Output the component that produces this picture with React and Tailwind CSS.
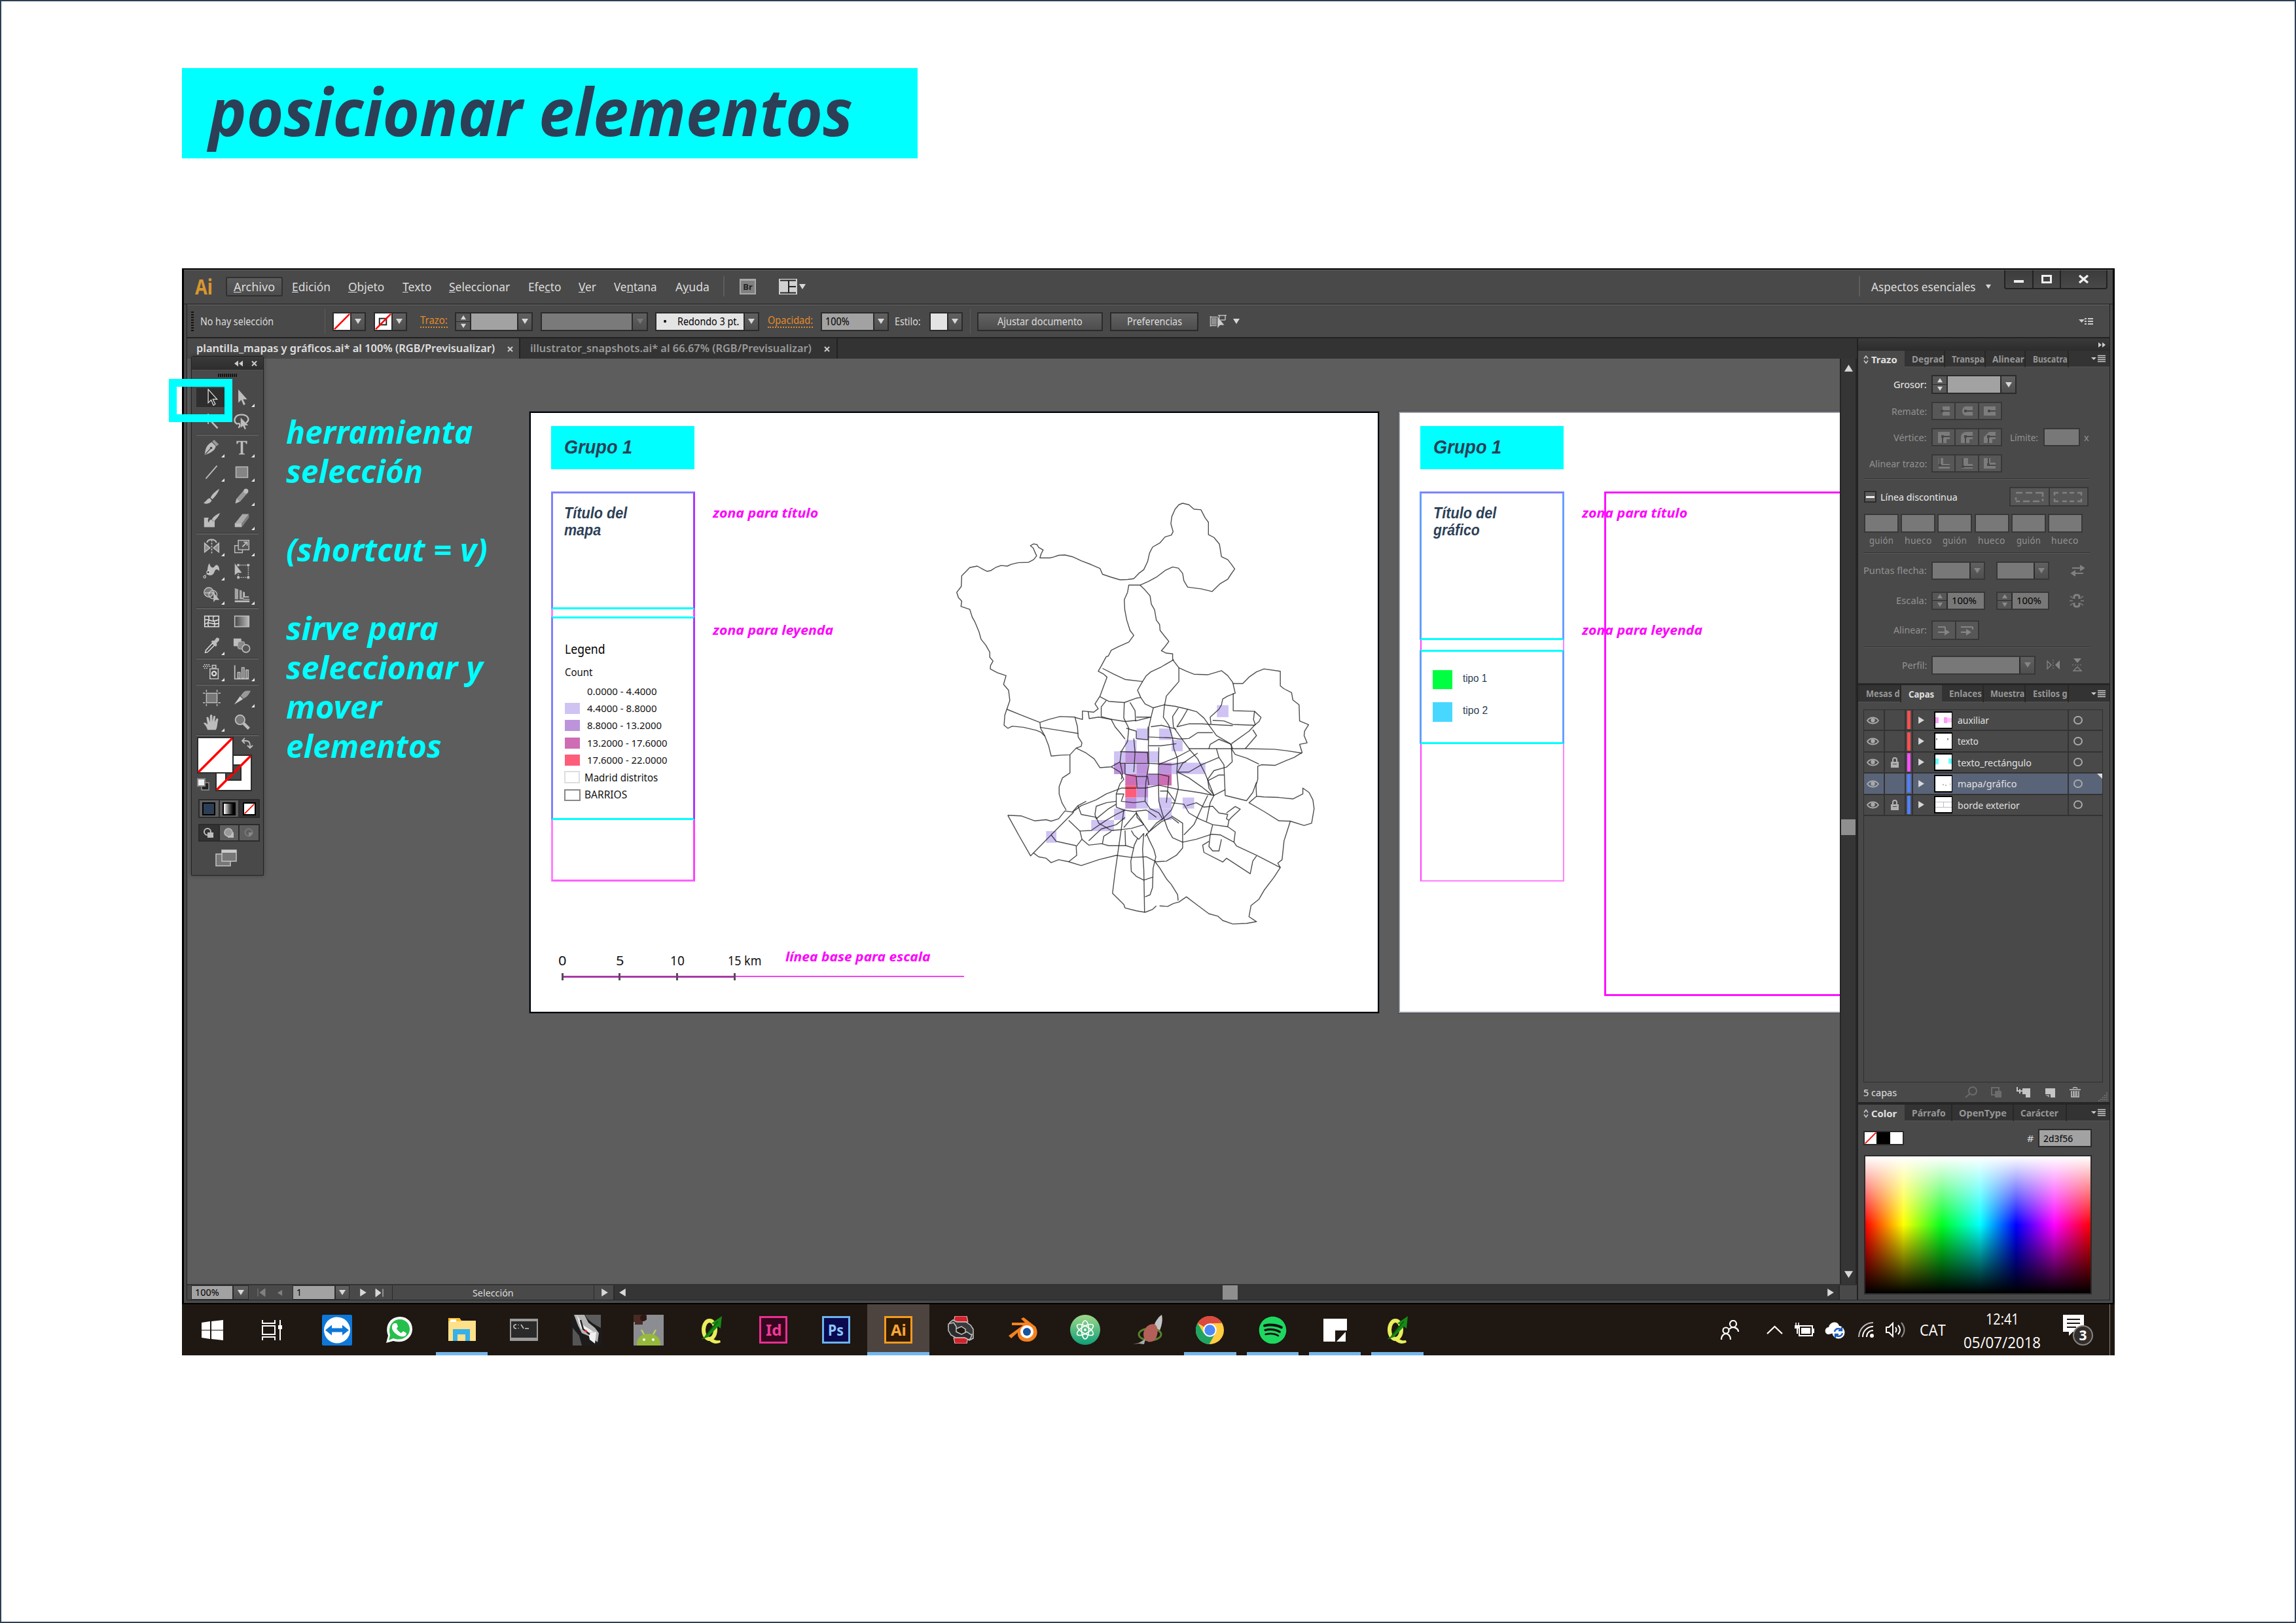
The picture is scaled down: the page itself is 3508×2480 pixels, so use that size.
import React, { useLayoutEffect, useRef } from "react";
import { FaSpotify } from "react-icons/fa";

/* Text set to an exact advance width, whatever the font's own metrics. */
function T({ w, className = "", inner = "", children }) {
  const ref = useRef(null);
  useLayoutEffect(() => {
    const el = ref.current;
    if (el && w) el.style.transform = `scaleX(${w / el.offsetWidth})`;
  }, [w, children]);
  return (
    <span style={w ? { width: w } : undefined} className={`inline-flex shrink-0 whitespace-nowrap ${className}`}>
      <span ref={ref} className={`inline-block shrink-0 origin-left ${inner}`}>{children}</span>
    </span>
  );
}

/* Text on the artboards, placed by its baseline. */
function Mark({ x, y, w, size, arial, className = "", children }) {
  return (
    <div
      className={`absolute leading-none ${arial ? "font-['Liberation_Sans',sans-serif]" : ""} ${className}`}
      style={{ left: x, top: y + 1 - size * (arial ? 0.8465 : 0.888), fontSize: size }}
    >
      <T w={w}>{children}</T>
    </div>
  );
}

function Box({ x, y, w, h, className = "" }) {
  return <div className={`absolute ${className}`} style={{ left: x, top: y, width: w, height: h }} />;
}

function Tri({ d = "down", s = 10, c = "#d8d8d8" }) {
  const p = { down: "0,1 10,1 5,9", up: "0,9 10,9 5,1", right: "1,0 9,5 1,10", left: "9,0 1,5 9,10" }[d];
  return (
    <svg width={s} height={s} viewBox="0 0 10 10" className="shrink-0" preserveAspectRatio="none">
      <polygon points={p} fill={c} />
    </svg>
  );
}

const edge = "border-2 border-[#2b2b2b]";

function Arrow({ className = "w-[24px]", c = "#d8d8d8" }) {
  return (
    <div className={`flex shrink-0 items-center justify-center border-l-2 border-[#2b2b2b] bg-gradient-to-b from-[#606060] to-[#4f4f4f] ${className}`}>
      <Tri c={c} />
    </div>
  );
}

function Stepper({ c = "#d8d8d8" }) {
  return (
    <div className="flex w-[23px] shrink-0 flex-col border-r-2 border-[#2b2b2b] bg-[#575757]">
      <div className="flex flex-1 items-center justify-center border-b border-[#2b2b2b]"><Tri d="up" s={8} c={c} /></div>
      <div className="flex flex-1 items-center justify-center"><Tri s={8} c={c} /></div>
    </div>
  );
}

function NoneSwatch({ stroke }) {
  return (
    <svg viewBox="0 0 26 26" preserveAspectRatio="none" className="h-full w-full bg-white">
      {stroke && <rect x="7" y="8" width="11" height="10" fill="none" stroke="#222" strokeWidth="2" />}
      <line x1="1" y1="25" x2="25" y2="1" stroke="#f00" strokeWidth="2.6" />
    </svg>
  );
}

function Flyout() {
  return (
    <svg width="22" height="12" viewBox="0 0 22 12" className="shrink-0">
      <polygon points="0,4 8,4 4,8" fill="#ccc" />
      <path d="M10 1.5h12M10 4.5h12M10 7.5h12M10 10.5h12" stroke="#ccc" strokeWidth="1.4" />
    </svg>
  );
}

/* ---------- menu and control bars ---------- */

function MenuBar() {
  const rest = [
    ["ml-[14px]", 59, "E", "dición", ""],
    ["ml-[27px]", 55, "O", "bjeto", ""],
    ["ml-[28px]", 44, "T", "exto", ""],
    ["ml-[27px]", 93, "S", "eleccionar", ""],
    ["ml-[28px]", 50, "c", "to", "Efe"],
    ["ml-[27px]", 27, "V", "er", ""],
    ["ml-[27px]", 66, "n", "tana", "Ve"],
    ["ml-[28px]", 52, "y", "uda", "A"],
  ];
  return (
    <div className="flex h-[53px] items-center border-b border-[#222] border-t-[1px] border-t-[#666] pb-[2px] text-[18px] leading-none text-[#dcdcdc]">
      <T w={27} className="ml-[17px] text-[33px] font-bold text-[#d9962f]">Ai</T>
      <div className="ml-[20px] flex h-[30px] w-[87px] items-center justify-center rounded-[3px] border-2 border-[#303030] bg-gradient-to-b from-[#5b5b5b] to-[#4c4c4c]">
        <T w={63}><u>A</u>rchivo</T>
      </div>
      {rest.map(([m, w, u, b, a]) => (
        <T key={b} w={w} className={m}>{a}<u>{u}</u>{b}</T>
      ))}
      <div className="ml-[21px] h-[31px] w-[2px] bg-[#5c5c5c]" />
      <div className="ml-[23px] flex h-[24px] w-[25px] items-center justify-center border-2 border-t-[3px] border-[#a9a9a9] bg-[#808080] text-[13px] font-bold text-[#222]">Br</div>
      <svg className="ml-[35px]" width="28" height="24" viewBox="0 0 28 24">
        <rect width="28" height="24" fill="#d0d0d0" />
        <path d="M2 2.5h24M2 21.5h24M15 2v20M15 12h11" stroke="#222" strokeWidth="2" />
      </svg>
      <span className="ml-[3px]"><Tri /></span>
      <div className="ml-auto h-[31px] w-[2px] bg-[#5c5c5c]" />
      <T w={160} className="ml-[17px]">Aspectos esenciales</T>
      <span className="ml-[15px]"><Tri s={8} /></span>
      <div className="ml-[20px] mr-[8px] flex h-[29px] w-[158px] self-start rounded-b-[4px] border-2 border-t-0 border-[#222] bg-gradient-to-b from-[#3c3c3c] to-[#484848]">
        <div className="flex w-[43px] items-center justify-center border-r-2 border-[#222]"><div className="mt-[6px] h-[4px] w-[15px] bg-[#eee]" /></div>
        <div className="flex w-[42px] items-center justify-center border-r-2 border-[#222]"><div className="h-[13px] w-[16px] border-[3px] border-[#eee]" /></div>
        <div className="flex flex-1 items-center justify-center">
          <svg width="17" height="13" viewBox="0 0 17 13"><path d="M2 1l13 11M15 1L2 12" stroke="#eee" strokeWidth="3.4" /></svg>
        </div>
      </div>
    </div>
  );
}

function ControlBar() {
  const f = `flex h-[29px] shrink-0 ${edge}`;
  return (
    <div className="flex h-[52px] items-center border-b-2 border-[#222] border-t-2 border-t-[#555] text-[16px] leading-none text-[#dcdcdc]">
      <div className="ml-[6px] flex h-[31px] w-[4px] flex-col gap-[2px] overflow-hidden">
        {Array.from({ length: 8 }, (_, i) => <div key={i} className="h-[2px] shrink-0 bg-[#111]" />)}
      </div>
      <T w={112} className="ml-[10px]">No hay selección</T>
      <div className="ml-[78px] h-[38px] w-[1px] bg-[#5c5c5c]" />
      <div className={`${f} ml-[11px] w-[51px]`}><div className="flex-1"><NoneSwatch /></div><Arrow className="w-[22px]" /></div>
      <div className={`${f} ml-[12px] w-[51px]`}><div className="flex-1"><NoneSwatch stroke /></div><Arrow className="w-[22px]" /></div>
      <T w={42} className="ml-[20px] border-b-2 border-dotted border-[#e48a2a] pb-[2px] text-[#e48a2a]">Trazo:</T>
      <div className={`${f} ml-[11px] w-[119px]`}><Stepper /><div className="flex-1 bg-[#a2a2a2]" /><Arrow className="w-[22px]" /></div>
      <div className={`${f} ml-[12px] w-[164px]`}><div className="flex-1 bg-[#7a7a7a]" /><Arrow className="w-[23px]" c="#777" /></div>
      <div className={`${f} ml-[11px] w-[159px]`}>
        <div className="flex flex-1 items-center bg-[#e4e4e4] text-black"><span className="ml-[10px] w-[22px]">•</span><T w={94}>Redondo 3 pt.</T></div>
        <Arrow className="w-[22px]" />
      </div>
      <T w={69} className="ml-[13px] border-b-2 border-dotted border-[#e48a2a] pb-[2px] text-[#e48a2a]">Opacidad:</T>
      <div className={`${f} ml-[12px] w-[104px]`}>
        <div className="flex flex-1 items-center bg-[#a2a2a2] pl-[5px] text-black"><T w={37}>100%</T></div>
        <Arrow className="w-[22px]" />
      </div>
      <T w={40} className="ml-[9px]">Estilo:</T>
      <div className={`${f} ml-[13px] w-[51px]`}><div className="flex-1 bg-[#e4e4e4]" /><Arrow className="w-[22px]" /></div>
      <div className="ml-[11px] h-[38px] w-[1px] bg-[#5c5c5c]" />
      <div className={`${f} ml-[10px] w-[192px] items-center justify-center bg-gradient-to-b from-[#626262] to-[#4d4d4d]`}><T w={130}>Ajustar documento</T></div>
      <div className={`${f} ml-[11px] w-[135px] items-center justify-center bg-gradient-to-b from-[#626262] to-[#4d4d4d]`}><T w={84}>Preferencias</T></div>
      <svg className="ml-[17px]" width="26" height="23" viewBox="0 0 26 23">
        <rect x="3" y="6" width="8" height="10" fill="#8f8f8f" />
        <path d="M1 4.500h12M1 17.500h10M1.500 3v16M15 1v8M24 1v8M13 2h13M15 9h9" stroke="#bbb" strokeWidth="1.500" fill="none" />
        <path d="M12 3v19l4-5h7z" fill="#ccc" stroke="#444" strokeWidth=".6" />
      </svg>
      <span className="ml-[10px]"><Tri /></span>
      <svg className="ml-auto mr-[25px]" width="22" height="12" viewBox="0 0 22 12">
        <polygon points="0,3 9,3 4.500,8" fill="#ccc" /><path d="M9 2h3M9 6h3M9 10h3M14 2h8M14 6h8M14 10h8" stroke="#ccc" strokeWidth="2.200" />
      </svg>
    </div>
  );
}

/* ---------- tools ---------- */

const L = "#bdbdbd";
const toolArt = {
  select: <path d="M9 1v23l5-5 4 9 3-2-4-8h7z" fill="#262626" stroke="#e2e2e2" strokeWidth="1.4" />,
  direct: <path d="M9 1v23l5-5 4 9 3-2-4-8h7z" fill={L} />,
  wand: <g stroke={L} strokeWidth="2" fill="none"><path d="M12 12l13 14" strokeWidth="3" /><path d="M9 1v6M9 14v5M2 10h5M12 10h5M4 5l3 3M14 5l-3 3" /></g>,
  lasso: <g><path d="M7 19C-1 14 3 3 14 3s16 8 8 14M7 19c5-4 6 4 2 6" fill="none" stroke={L} strokeWidth="2.6" /><path d="M13 8v17l4-3 3 6 2-1-2-6h6z" fill={L} /></g>,
  pen: <g><path d="M3 27C4 14 8 9 15 5l7 7c-2 8-8 11-19 15z" fill={L} /><path d="M16 4l3-3 8 8-4 3z" fill="#999" /><path d="M4 26l9-10" stroke="#444" strokeWidth="1.5" /><circle cx="14" cy="15" r="2" fill="#444" /></g>,
  text: <path d="M6 3h18v5h-2l-1-3h-4v19l3 1v1H10v-1l3-1V5H9L8 8H6z" fill={L} />,
  line: <path d="M5 26L24 4" stroke={L} strokeWidth="2" />,
  rect: <rect x="5" y="6" width="20" height="18" fill="#858585" stroke={L} strokeWidth="1.6" />,
  brush: <path d="M28 2C22 6 16 11 13 17l3 3c5-5 10-11 12-18zM12 18c-5 0-6 6-11 8 5 3 12 1 14-4z" fill={L} />,
  pencil: <g><path d="M4 27l2-8L18 5l6 5L12 24z" fill="#999" /><path d="M4 27l2-8 5 5z" fill={L} /><circle cx="22" cy="6" r="4" fill={L} /></g>,
  blob: <g><path d="M2 10h8c-3 5-1 9 3 9 5 0 6-4 7-7v14H2z" fill={L} /><path d="M29 2C23 5 18 8 15 13l4 3c4-4 8-8 10-14zM14 13c-4 1-3 5-5 7 4 0 8 0 9-4z" fill={L} /></g>,
  eraser: <g><path d="M3 20L16 4h11L15 20z" fill="#aaa" /><path d="M3 20h12v6H3z" fill={L} /><path d="M15 20L27 4v6L15 26z" fill="#7e7e7e" /></g>,
  rotate: <g fill="none" stroke={L} strokeWidth="1.8"><path d="M3 24V9l9 8zM27 24V9l-9 8z" fill="#8c8c8c" /><path d="M15 3v25" strokeDasharray="3 2" /><path d="M7 8c1-7 14-7 16 0" strokeWidth="2.4" /></g>,
  scale: <g fill="none" stroke={L} strokeWidth="1.6"><rect x="3" y="13" width="13" height="12" /><rect x="9" y="4" width="18" height="16" fill="#555" /><path d="M16 15l7-7M18 7h6v6" strokeWidth="2" /></g>,
  width: <g><path d="M2 24c8-2 4-16 9-22 2 8 6 9 9 5 4-5 8-1 8 8-5-5-7-3-9 3-3 6-9 5-13 2z" fill={L} /><circle cx="9" cy="17" r="2.5" fill="#444" stroke="#fff" /><circle cx="3" cy="25" r="2" fill="none" stroke="#fff" /></g>,
  free: <g><path d="M3 2v20l5-4 7 0z" fill={L} /><path d="M9 5h17v21H9v-6" fill="none" stroke={L} strokeWidth="1.6" strokeDasharray="2 1.500" /><path d="M7 3h4v4H7zM24 3h4v4h-4zM24 24h4v4h-4zM7 24h4v4H7z" fill={L} /></g>,
  shape: <g><circle cx="10" cy="10" r="8" fill="#777" stroke={L} strokeWidth="1.6" /><circle cx="17" cy="14" r="7" fill="none" stroke={L} strokeWidth="1.6" /><path d="M4 11h16" stroke="#fff" strokeWidth="1.6" strokeDasharray="2 1.5" /><path d="M18 10v17l3-4h7z" fill={L} /></g>,
  persp: <g><path d="M3 3l6 2v17H3zM11 6l4 1v12h3v3h-7z" fill="#a5a5a5" /><path d="M17 9l3 1v7h7v2H17zM3 24h25v3H3zM17 21h11v1.500H17z" fill={L} /></g>,
  mesh: <g fill="none" stroke="#e0e0e0" strokeWidth="1.7"><rect x="3" y="6" width="24" height="18" /><path d="M3 13c7-5 9 6 24-1M3 20c8-7 14 3 24-2M9 6c5 6-4 10 1 18M19 6c-6 7 5 10 0 18" /></g>,
  grad: <g><defs><linearGradient id="tg"><stop offset="0" stopColor="#444" /><stop offset="1" stopColor="#bbb" /></linearGradient></defs><rect x="3" y="6" width="24" height="18" fill="url(#tg)" stroke={L} strokeWidth="1.8" /></g>,
  drop: <g><path d="M4 27l1-4L16 11l4 3L8 26z" fill="none" stroke="#ddd" strokeWidth="1.6" /><path d="M14 8l3-2 2 1 4-5c4-1 6 2 4 5l-4 4 1 3-2 3z" fill={L} /></g>,
  blend: <g><rect x="1" y="3" width="13" height="13" fill={L} /><rect x="8" y="8" width="12" height="13" rx="4" fill="#888" stroke={L} /><circle cx="22" cy="20" r="6.5" fill="#555" stroke={L} strokeWidth="1.8" /></g>,
  spray: <g><path d="M12 10h14v17H12zM16 4h6v5h-6z" fill="none" stroke={L} strokeWidth="1.8" /><circle cx="19" cy="18" r="3.5" fill="none" stroke="#ddd" strokeWidth="2.4" /><path d="M0 6h13M2 3h10M2 9h7" stroke="#ddd" strokeWidth="1.6" strokeDasharray="2 1.6" /></g>,
  graph: <g fill="#777" stroke={L} strokeWidth="1.6"><path d="M3 4v23h24" fill="none" strokeWidth="2" /><rect x="8" y="16" width="4" height="10" /><rect x="15" y="8" width="4" height="18" /><rect x="22" y="12" width="4" height="14" /></g>,
  board: <g fill="none" stroke={L} strokeWidth="1.6"><rect x="6" y="7" width="18" height="16" fill="#777" /><path d="M6 1v4M24 1v4M6 25v4M24 25v4M0 7h4M0 23h4M26 7h4M26 23h4" /></g>,
  knife: <g><path d="M2 26L12 12l5 5z" fill="#ccc" /><path d="M13 11l5-6c4-3 8-2 12-2-3 5-5 10-12 13z" fill="#999" /></g>,
  hand: <path d="M8 28c-2-6-5-9-7-11 2-3 5 0 7 2L6 7c2-2 4 0 4 2l2 6V4c1-3 4-2 4 0v10l2-9c2-2 4 0 3 2l-1 8 3-6c2-1 3 0 3 2-2 6-1 12-4 17z" fill={L} />,
  zoom: <g><circle cx="12" cy="11" r="8" fill="#777" stroke={L} strokeWidth="2" /><path d="M18 17l9 9" stroke={L} strokeWidth="5" /></g>,
};

const toolRows = [
  ["select", "direct", 0, 1], ["wand", "lasso", 0, 0], null,
  ["pen", "text", 1, 1], ["line", "rect", 1, 1], ["brush", "pencil", 0, 1], ["blob", "eraser", 0, 1], null,
  ["rotate", "scale", 1, 1], ["width", "free", 1, 0], ["shape", "persp", 1, 1], null,
  ["mesh", "grad", 0, 0], ["drop", "blend", 1, 0], null,
  ["spray", "graph", 1, 1], null,
  ["board", "knife", 0, 1], ["hand", "zoom", 1, 0], null,
];

function Tool({ name, more, on }) {
  return (
    <div className={`relative flex h-[37px] w-[46px] items-center justify-center ${on ? "bg-[#2e2e2e] bg-clip-content py-[4px]" : ""}`}>
      <svg width="27" height="27" viewBox="0 0 30 30">{toolArt[name]}</svg>
      {more ? <svg className="absolute bottom-[4px] right-[3px]" width="5" height="5" viewBox="0 0 5 5"><path d="M5 0v5H0z" fill="#e8e8e8" /></svg> : null}
    </div>
  );
}

function ToolPanel() {
  const cell = "flex flex-1 items-center justify-center border-r-2 border-[#2b2b2b] last:border-r-0";
  return (
    <div className="absolute left-[6px] top-[-4px] z-10 flex h-[794px] w-[111px] flex-col rounded-t-[3px] border border-[#222] bg-[#494949] shadow-[0_0_6px_rgba(0,0,0,.35)]">
      <div className="flex h-[20px] items-center justify-end gap-[13px] bg-gradient-to-b from-[#3a3a3a] to-[#2d2d2d] pr-[9px]">
        <svg width="13" height="9" viewBox="0 0 13 9"><path d="M6 0v9L0 4.500zM13 0v9L7 4.500z" fill="#ccc" /></svg>
        <svg width="9" height="9" viewBox="0 0 9 9"><path d="M1 1l7 7M8 1L1 8" stroke="#ccc" strokeWidth="2" /></svg>
      </div>
      <div className="flex h-[24px] items-start justify-center gap-[1px] border-t border-[#555] pt-[5px]">
        {Array.from({ length: 10 }, (_, i) => <div key={i} className="h-[5px] w-[2px] bg-[#161616]" />)}
      </div>
      {toolRows.map((r, i) =>
        r ? (
          <div key={i} className="flex pl-[7px]">
            <Tool name={r[0]} more={r[2]} on={i === 0} />
            <Tool name={r[1]} more={r[3]} />
          </div>
        ) : (
          <div key={i} className="mx-[7px] h-[3px] border-b-2 border-[#5c5c5c] border-t border-t-[#3a3a3a]" />
        )
      )}
      <div className="relative ml-[8px] h-[95px] w-[92px]">
        <svg className="absolute left-[28px] top-[28px]" width="56" height="56" viewBox="0 0 56 56">
          <rect x="1" y="1" width="54" height="54" fill="#fff" stroke="#2b2b2b" strokeWidth="2" />
          <rect x="16" y="16" width="23" height="23" fill="#494949" stroke="#2b2b2b" strokeWidth="2" />
          <line x1="2" y1="54" x2="54" y2="2" stroke="#f00" strokeWidth="3.6" />
        </svg>
        <svg className="absolute left-0 top-[1px]" width="56" height="56" viewBox="0 0 56 56">
          <rect x="1" y="1" width="54" height="54" fill="#fff" stroke="#2b2b2b" strokeWidth="2" />
          <line x1="2" y1="54" x2="54" y2="2" stroke="#f00" strokeWidth="3.6" />
        </svg>
        <svg className="absolute left-[68px] top-[2px]" width="18" height="18" viewBox="0 0 18 18"><path d="M2 5h5c4 0 6 3 6 7v3M5 1L1 5l4 4M9 12l4 4 4-4" fill="none" stroke={L} strokeWidth="1.8" /></svg>
        <svg className="absolute left-0 top-[64px]" width="19" height="19" viewBox="0 0 19 19"><rect x="7" y="7" width="11" height="11" fill="#222" stroke="#bbb" /><rect x="1" y="1" width="11" height="11" fill="#eee" stroke="#888" strokeWidth="2" /></svg>
      </div>
      <div className={`ml-[10px] mt-[1px] flex h-[29px] w-[94px] shrink-0 bg-[#5e5e5e] ${edge}`}>
        <div className={cell}><div className="h-[20px] w-[20px] border-2 border-black bg-[#2d3f56]" /></div>
        <div className={cell}><div className="h-[20px] w-[20px] border-2 border-black bg-gradient-to-r from-white to-black" /></div>
        <div className={`${cell} bg-[#333]`}><div className="h-[20px] w-[20px] border-2 border-black"><NoneSwatch /></div></div>
      </div>
      <div className={`ml-[10px] mt-[9px] flex h-[27px] w-[94px] shrink-0 bg-[#5e5e5e] ${edge}`}>
        <div className={`${cell} bg-[#333]`}><svg width="16" height="16" viewBox="0 0 16 16"><circle cx="6" cy="6" r="5" fill="none" stroke={L} strokeWidth="2" /><rect x="6" y="7" width="9" height="8" fill={L} /></svg></div>
        <div className={cell}><svg width="16" height="16" viewBox="0 0 16 16"><rect x="6" y="7" width="9" height="8" fill={L} /><circle cx="7" cy="7" r="6" fill="#999" stroke={L} strokeWidth="1.6" /></svg></div>
        <div className={cell}><svg width="16" height="16" viewBox="0 0 16 16"><circle cx="7" cy="7" r="5.500" fill="none" stroke="#777" strokeWidth="2" /><path d="M7 7h6v2l-4 4H7z" fill="#888" /></svg></div>
      </div>
      <svg className="ml-[36px] mt-[12px]" width="33" height="27" viewBox="0 0 33 27"><rect x="1" y="7" width="22" height="18" fill="#777" stroke={L} strokeWidth="1.6" /><rect x="10" y="1" width="22" height="17" fill="#777" stroke={L} strokeWidth="1.6" /><path d="M10 3h22" stroke="#ccc" strokeWidth="4" /></svg>
    </div>
  );
}

/* ---------- canvas ---------- */

const mapLines = [
  "790,323 765,326 735,327 700,318 665,308 655,288 620,275 580,262 545,248 515,242 490,243 470,249 455,252 415,252 420,238 428,225 410,216 403,206 390,204 377,210 388,218 402,245 390,258 370,267 330,268 300,274 285,280 260,278 240,284 220,295 205,298 190,292 165,280 135,285 118,300 103,313 101,350 83,370 90,388 103,400 100,418 135,428 145,455 155,470 172,505 180,530 200,552 215,575 215,592 228,605 218,620 217,632 245,645 280,655 270,685 290,705 295,740 283,770 275,790 272,825 287,835 305,828 350,832 400,842 418,848 435,862",
  "790,323 810,305 830,292 845,265 853,235 865,215 895,200 915,180 940,174 947,162 938,135 942,110 955,85 970,70 985,65 1010,70 1030,85 1058,87 1075,115 1088,130 1088,172 1110,182 1132,205 1140,248 1165,258 1178,272 1193,290 1178,308 1165,325 1135,340 1103,367 1060,358 1005,352 990,330 985,305 968,287 945,283 915,295 880,318 850,332 815,345 770,345 765,370 752,395 754,430 762,465 775,500 790,517 770,540 730,555 700,568 688,588 680,590 660,622 648,640 670,650 683,660 668,695 655,725 635,752 648,768 630,780 585,776 585,805 555,798",
  "815,345 835,362 855,382 860,410 873,430 880,465 893,480 895,500 915,522 930,538 915,555 900,570 920,578 945,580 945,600 970,628 970,675 945,700 920,725 912,760 908,797 930,825 945,870 950,905 965,940",
  "665,630 710,650 755,668 825,675 840,655 858,642 900,625 950,600",
  "825,675 805,705 818,730 835,752 868,765 858,800 850,830 848,900 850,960 838,1020 835,1085 855,1110 890,1125 905,1145 880,1160 850,1190",
  "970,628 1000,640 1030,650 1085,652 1140,638 1165,655 1185,678 1195,715 1165,725 1145,735 1140,755 1130,770 1095,797 1098,820",
  "1185,682 1225,682 1250,660 1280,642 1310,632 1375,640 1375,690 1390,700 1420,713 1425,738 1450,755 1452,810 1488,823 1472,845 1470,860 1482,885 1452,890 1462,918 1430,935 1400,945 1355,962 1300,960 1285,965 1285,1010 1278,1030 1280,1068 1310,1070 1370,1072 1425,1077 1465,1060 1465,1040 1490,1055 1505,1080 1510,1110 1500,1160 1470,1168 1415,1153 1370,1152 1310,1120 1250,1090 1280,1068",
  "1187,715 1187,775 1272,777 1298,798 1290,812 1272,825 1185,822 1150,810 1105,808",
  "1272,777 1268,805 1275,822 1250,845 1180,888",
  "1265,840 1280,860 1235,905",
  "1415,1153 1405,1180 1390,1220 1382,1285 1365,1297 1375,1312 1350,1345 1310,1390 1290,1420 1258,1442 1250,1480 1280,1497 1240,1503 1185,1505 1145,1493 1125,1478 1090,1470 1040,1438 1000,1412 970,1430 948,1435 925,1445 893,1443",
  "880,1443 865,1455 835,1465 800,1460 755,1450 750,1438 705,1400 715,1330 725,1270 740,1180 750,1115",
  "830,1195 825,1250 830,1320 833,1465",
  "875,1292 895,1315 920,1350 940,1370 965,1405 967,1425",
  "840,1195 853,1220 870,1250 878,1275 867,1315 865,1380 855,1405 835,1412",
  "805,1212 792,1235 778,1290 780,1325 800,1342 830,1355 865,1345",
  "283,770 340,790 415,815 450,805 495,795 555,797 565,830 568,865 583,885 580,897 560,903 535,926 500,927 460,930 450,895 435,862 418,835 415,815",
  "415,832 490,842 568,853",
  "560,903 600,920 632,940 655,970 700,967 735,950",
  "608,778 612,802 650,797 690,803 755,812 800,808",
  "655,727 690,743 752,747 800,732 818,730",
  "680,740 660,762 660,795 700,805 715,830 735,850 755,872",
  "752,747 750,800 770,835 765,880 740,915 735,950 745,990 740,1010",
  "775,747 795,775 797,810 858,797 800,797",
  "868,765 910,755 955,760 1005,770 1040,778 1070,800 1095,830 1120,860 1175,888 1185,905",
  "968,765 945,795 948,830 985,875 1015,910 1045,940 1075,990 1110,1065 1095,1090 1080,1155",
  "1005,770 985,800 962,830 1010,820 1060,820 1098,822 1185,826",
  "858,830 900,825 960,838",
  "850,865 940,868 975,872 1010,870 1045,850 1105,850",
  "850,895 900,895 960,888",
  "1010,905 1100,905 1240,905 1350,907 1400,912 1462,920",
  "1090,905 1095,890 1130,873 1180,890 1180,905 1195,925 1240,937 1290,958",
  "1120,905 1130,935 1150,960 1155,1065 1240,1083 1265,1055 1280,1020",
  "1180,905 1183,950 1160,968 1110,980 1085,1010 1090,1040 1110,1065 1155,1045",
  "1015,910 960,935 900,955 890,960",
  "1045,920 985,955 965,985 1010,985 1060,960 1130,935",
  "1085,1015 1130,995 1150,995",
  "965,985 1010,1005 1060,1035 1100,1062",
  "965,940 962,985 968,1040 955,1085 940,1115 900,1150",
  "890,900 888,1000 890,1085 905,1130 925,1180 945,1210 985,1225",
  "847,955 890,957 940,960 1000,950",
  "847,992 890,992 930,1000 925,1050 920,1090",
  "735,915 845,918 847,955 735,955",
  "755,955 755,992 800,1000 845,1000 850,1030",
  "790,870 795,918 790,985",
  "800,1000 803,1040 835,1040 890,1030 970,1045 1050,1055 1110,1065",
  "760,835 800,845 800,870 847,875 847,830",
  "700,967 735,985 750,1010 735,1025 720,1060 720,1105 750,1115",
  "545,1122 580,1100 640,1080 680,1060 740,1040 800,1040",
  "720,1085 680,1090 640,1102 635,1130 640,1145 690,1110 720,1095",
  "750,1115 790,1120 840,1115 880,1140",
  "287,1133 340,1135 395,1152 440,1148 460,1153 490,1145 515,1118 545,1122 567,1100 600,1085",
  "287,1133 330,1200 378,1272 460,1200 550,1122",
  "535,926 535,988 505,1005 492,1035 492,1060 503,1090 520,1115",
  "390,1262 410,1275 440,1280 460,1295 490,1285 530,1292 580,1305 650,1285 720,1270 780,1277 840,1275 880,1292 920,1290 960,1270 985,1245 985,1160 940,1135",
  "530,1150 575,1187 583,1215 560,1240 562,1270 530,1292",
  "575,1187 620,1185 680,1150 720,1130 755,1115",
  "583,1215 610,1235 660,1230 690,1237 760,1237 790,1245",
  "460,1200 480,1222 560,1237",
  "567,1100 580,1130 640,1140 650,1160 700,1185 740,1182 780,1178 830,1165",
  "610,1220 660,1180 720,1165 755,1140",
  "665,1230 670,1205 700,1188",
  "755,1185 757,1237",
  "750,1175 800,1125 830,1165 850,1190 835,1205",
  "780,1185 790,1200 810,1215 830,1195",
  "850,1190 900,1155 940,1140 970,1160",
  "985,1225 1040,1215 1100,1198 1135,1200 1190,1225 1200,1238 1280,1270 1375,1312",
  "940,1090 990,1095 1010,1125 1050,1145 1105,1165 1165,1172 1195,1190 1190,1225",
  "990,1200 1030,1165 1060,1110 1085,1065",
  "1000,1100 1040,1090 1070,1105 1105,1102 1130,1125 1165,1130 1160,1145 1170,1150 1165,1172",
  "1160,1125 1195,1103 1215,1112 1180,1140 1170,1150",
  "1105,1165 1095,1200 1090,1240 1105,1255 1130,1255 1140,1215",
  "1090,1222 1065,1235 1070,1260 1145,1293 1160,1280 1255,1333 1265,1290 1280,1272",
  "720,1060 750,1060 740,1085 790,1090 835,1085",
  "895,1050 925,1050 955,1085",
  "800,1120 803,1140 830,1165",
];

const cells = [
  ["#cfc3f4", [[1122, 756, 46, 41], [801, 836, 46, 39], [891, 836, 50, 39], [756, 875, 45, 39], [941, 875, 44, 39], [711, 914, 45, 39], [847, 914, 44, 39], [756, 953, 45, 39], [941, 953, 135, 39], [801, 1072, 46, 38], [891, 1072, 50, 38], [985, 1072, 46, 38], [711, 1110, 45, 39], [847, 1110, 94, 39], [620, 1149, 91, 38], [440, 1187, 41, 40]]],
  ["#bd93dc", [[756, 914, 91, 39], [711, 953, 45, 39], [801, 953, 46, 39], [891, 953, 50, 39], [801, 992, 90, 39], [801, 1031, 46, 41], [756, 1072, 45, 38]]],
  ["#cf6db4", [[756, 992, 45, 39], [891, 992, 50, 39]]],
  ["#ff5c7a", [[756, 1031, 45, 41]]],
];

function DistrictMap() {
  return (
    <svg className="absolute left-[621px] top-[111px]" width="600" height="700" viewBox="0 0 1568 1568" preserveAspectRatio="none">
      {cells.map(([c, list]) => list.map(([x, y, w, h]) => <rect key={`${x}-${y}`} x={x} y={y} width={w} height={h} fill={c} />))}
      <g fill="none" stroke="#222" strokeOpacity=".8" strokeWidth="1.4" strokeLinejoin="round">
        {mapLines.map((p, i) => <polyline key={i} points={p} vectorEffect="non-scaling-stroke" />)}
      </g>
    </svg>
  );
}

const navy = "font-bold italic text-[#2d3f56]";
const pink = "font-bold italic text-[#ff00ff]";

/* Coordinates inside an artboard are measured from its outer corner at (809, 629). */
function BoardOne() {
  const legend = [
    ["0.0000 - 4.4000", 106, ""], ["4.4000 - 8.8000", 106, "bg-[#cfc3f4]"], ["8.8000 - 13.2000", 114, "bg-[#bd93dc]"],
    ["13.2000 - 17.6000", 123, "bg-[#cf6db4]"], ["17.6000 - 22.0000", 123, "bg-[#ff5c7a]"],
  ];
  return (
    <div className="absolute left-[523px] top-[81px] h-[919px] w-[1298px] bg-white shadow-[inset_0_0_0_2px_#000,0_0_0_1px_#3c4657]">
      <Box x={33} y={22} w={219} h={66} className="bg-[#0ff]" />
      <Mark x={53} y={64} w={104} size={29} arial className={navy}>Grupo 1</Mark>
      <Box x={33} y={122} w={220} h={596} className="border-[3px] border-l-[#ff80ff] border-r-[#ff40ff] border-b-[#ff60ff] border-t-[#8080ff]" />
      <Box x={33} y={122} w={220} h={180} className="border-[3px] border-l-[#8080ff] border-r-[#a838ff] border-t-[#8080ff] border-b-[#0ff]" />
      <Box x={33} y={313} w={220} h={311} className="border-[3px] border-l-[#8080ff] border-r-[#a838ff] border-t-[#0ff] border-b-[#0ff]" />
      <Mark x={53} y={162} w={96} size={23} arial className={navy}>Título del</Mark>
      <Mark x={53} y={188} w={56} size={23} arial className={navy}>mapa</Mark>
      <Mark x={280} y={162} w={161} size={20} className={pink}>zona para título</Mark>
      <Mark x={280} y={341} w={184} size={20} className={pink}>zona para leyenda</Mark>
      <Mark x={54} y={370} w={62} size={19} className="text-black">Legend</Mark>
      <Mark x={54} y={403} w={42} size={16} className="text-[#111]">Count</Mark>
      {legend.map(([t, w, c], i) => (
        <React.Fragment key={t}>
          {c && <Box x={54} y={445 + (i - 1) * 26.300} w={23} h={17} className={c} />}
          <Mark x={88} y={432 + i * 26.400} w={w} size={15} className="text-[#111]">{t}</Mark>
        </React.Fragment>
      ))}
      <Box x={53} y={549} w={24} h={19} className="border-2 border-[#ddd]" />
      <Mark x={84} y={564} w={112} size={16} className="text-[#111]">Madrid distritos</Mark>
      <Box x={53} y={577} w={25} h={18} className="border-2 border-[#888]" />
      <Mark x={84} y={590} w={65} size={16} className="text-[#111]">BARRIOS</Mark>
      <DistrictMap />
      <Mark x={44} y={846} w={12} size={20} className="text-[#111]">0</Mark>
      <Mark x={132} y={846} w={12} size={20} className="text-[#111]">5</Mark>
      <Mark x={215} y={846} w={22} size={20} className="text-[#111]">10</Mark>
      <Mark x={303} y={846} w={51} size={20} className="text-[#111]">15 km</Mark>
      <Mark x={391} y={840} w={222} size={20} className={pink}>línea base para escala</Mark>
      <Box x={50} y={862} w={614} h={2} className="bg-[#f240f2]" />
      <Box x={50} y={862} w={264} h={3} className="bg-[#a83aa8]" />
      {[50, 137, 225, 313].map((x) => <Box key={x} x={x - 1} y={858} w={3} h={11} className="bg-[#5a4a5a]" />)}
    </div>
  );
}

function BoardTwo() {
  return (
    <div className="absolute left-[1851px] top-[81px] h-[919px] w-[700px] bg-white shadow-[inset_0_0_0_2px_#999,0_0_0_1px_#3c4657]">
      <Box x={33} y={22} w={219} h={66} className="bg-[#0ff]" />
      <Mark x={53} y={64} w={104} size={29} arial className={navy}>Grupo 1</Mark>
      <Box x={33} y={122} w={220} h={596} className="border-2 border-l-[#ff40ff] border-r-[#ff80ff] border-b-[#ff80ff] border-t-[#8080ff]" />
      <Box x={32} y={122} w={221} h={227} className="border-[3px] border-l-[#60a0ff] border-r-[#6aa0ff] border-t-[#8080ff] border-b-[#0ff]" />
      <Box x={32} y={364} w={221} h={144} className="border-[3px] border-l-[#60a0ff] border-r-[#6aa0ff] border-t-[#0ff] border-b-[#0ff]" />
      <Mark x={53} y={162} w={96} size={23} arial className={navy}>Título del</Mark>
      <Mark x={53} y={188} w={71} size={23} arial className={navy}>gráfico</Mark>
      <Box x={52} y={395} w={30} h={29} className="bg-[#00ff40]" />
      <Box x={52} y={444} w={30} h={30} className="bg-[#48d8ff]" />
      <Mark x={98} y={413} w={37} size={16} arial className="text-[#2d3f56]">tipo 1</Mark>
      <Mark x={98} y={462} w={38} size={16} arial className="text-[#2d3f56]">tipo 2</Mark>
      <Mark x={280} y={162} w={161} size={20} className={pink}>zona para título</Mark>
      <Mark x={280} y={341} w={184} size={20} className={pink}>zona para leyenda</Mark>
      <Box x={314} y={122} w={500} h={771} className="border-[3px] border-[#ff10ff]" />
    </div>
  );
}

function Note({ y, w, children }) {
  return <Mark x={151} y={y} w={w} size={49} className="font-bold italic text-[#0ff]">{children}</Mark>;
}

function Canvas() {
  return (
    <div className="relative h-full flex-1">
      <div className="absolute inset-0 overflow-hidden bg-[#5d5d5d]">
        <BoardOne />
        <BoardTwo />
        <Note y={129.500} w={285}>herramienta</Note>
        <Note y={189.500} w={209}>selección</Note>
        <Note y={310} w={308}>(shortcut = v)</Note>
        <Note y={430} w={233}>sirve para</Note>
        <Note y={490} w={301}>seleccionar y</Note>
        <Note y={550} w={146}>mover</Note>
        <Note y={609.500} w={238}>elementos</Note>
      </div>
      <ToolPanel />
      <div className="absolute left-[-28px] top-[31px] z-20 h-[66px] w-[97px] border-[12px] border-[#0ff]" />
    </div>
  );
}

function StatusBar() {
  return (
    <div className="flex h-[24px] items-center border-t-2 border-[#333] text-[14px] leading-none">
      <div className="ml-[6px] flex h-full w-[88px] border border-[#2b2b2b]">
        <div className="flex flex-1 items-center bg-[#a2a2a2] pl-[5px] text-black"><T w={37}>100%</T></div><Arrow className="w-[24px]" />
      </div>
      <svg className="ml-[13px]" width="13" height="12" viewBox="0 0 13 12"><path d="M1 0v12M12 0v12L4 6z" fill="#808080" stroke="#808080" /></svg>
      <span className="ml-[17px]"><Tri d="left" c="#808080" s={9} /></span>
      <div className="ml-[15px] flex h-full w-[87px] border border-[#2b2b2b]">
        <div className="flex flex-1 items-center bg-[#a2a2a2] pl-[5px] text-black">1</div><Arrow className="w-[22px]" />
      </div>
      <span className="ml-[15px]"><Tri d="right" s={12} /></span>
      <svg className="ml-[12px]" width="13" height="13" viewBox="0 0 13 12"><path d="M12 0v12M1 0v12l8-6z" fill="#d8d8d8" stroke="#d8d8d8" /></svg>
      <div className="ml-[13px] h-full w-[1px] bg-[#2b2b2b]" />
      <div className="flex w-[307px] justify-center text-[15px] text-[#dcdcdc]"><T w={63}>Selección</T></div>
      <div className="h-full w-[1px] bg-[#2b2b2b]" />
      <span className="ml-[10px] mr-[7px]"><Tri d="right" s={12} /></span>
      <div className="flex h-full flex-1 items-center border-x-2 border-[#2b2b2b] bg-[#353535] px-[6px]">
        <Tri d="left" s={12} />
        <div className="ml-[911px] h-full w-[23px] bg-[#8f8f8f]" />
        <span className="ml-auto"><Tri d="right" s={12} /></span>
      </div>
      <div className="w-[26px]" />
    </div>
  );
}

/* ---------- right-hand panels ---------- */

function Tabs({ h, tabs, active }) {
  return (
    <div className={`flex shrink-0 items-stretch bg-[#333] text-[14.500px] font-bold leading-none ${h}`}>
      {tabs.map(([t, w, pad, tw], i) => (
        <div
          key={t}
          style={{ width: w, paddingLeft: pad }}
          className={`flex shrink-0 items-center ${i === active ? "bg-[#494949] text-[#e0e0e0]" : "border-b-2 border-r-2 border-b-[#4d4d4d] border-r-[#272727] text-[#969696]"}`}
        >
          {pad === 8 && (
            <svg width="8" height="13" viewBox="0 0 8 13" className="mr-[4px] shrink-0"><path d="M1 5l3-4 3 4M1 8l3 4 3-4" fill="none" stroke="#ccc" strokeWidth="1.5" /></svg>
          )}
          <T w={tw}>{t}</T>
        </div>
      ))}
      <div className="flex flex-1 items-center justify-end border-b-2 border-[#4d4d4d] pr-[6px]"><Flyout /></div>
    </div>
  );
}

function Label({ w, on, children }) {
  return (
    <div className="flex w-[105px] shrink-0 justify-end">
      <T w={w} className={on ? "text-[#ececec]" : "text-[#929292]"}>{children}</T>
    </div>
  );
}

function Btns({ w, items, className = "" }) {
  return (
    <div className={`flex h-full shrink-0 border-2 border-[#383838] bg-[#575757] ${className}`} style={{ width: w }}>
      {items.map((d, i) => (
        <div key={i} className="flex flex-1 items-center justify-center border-r-2 border-[#383838] last:border-r-0">
          {d}
        </div>
      ))}
    </div>
  );
}

const g = (d, extra) => (
  <svg width="22" height="20" viewBox="0 0 22 20"><path d={d} fill="#7c7c7c" />{extra}</svg>
);
const ln = (d) => <path d={d} stroke="#484848" strokeWidth="2" fill="none" />;
const dot = (x, y) => <rect x={x - 2} y={y - 2} width="4" height="4" fill="#484848" />;
const Hr = ({ className }) => <div className={`ml-[8px] h-[2px] w-[346px] shrink-0 border-t border-t-[#333] bg-[#5a5a5a] ${className}`} />;

function StrokePanel() {
  const row = "flex shrink-0 items-center";
  const dim = "bg-[#787878]";
  const fe = "border-2 border-[#383838]";
  const dash = (d) => <svg width="48" height="18" viewBox="0 0 48 18"><path d={d} stroke="#7f7f7f" strokeWidth="2.500" fill="none" /></svg>;
  return (
    <div className="flex h-[482px] shrink-0 flex-col text-[14.500px] leading-none">
      <div className={`${row} mt-[11px] h-[29px]`}>
        <Label w={51} on>Grosor:</Label>
        <div className={`ml-[7px] flex h-full w-[130px] ${edge}`}><Stepper /><div className="flex-1 bg-[#a2a2a2]" /><Arrow className="w-[23px]" /></div>
      </div>
      <div className={`${row} mt-[12px] h-[28px]`}>
        <Label w={54}>Remate:</Label>
        <Btns w={108} className="ml-[7px]" items={[
          g("M9 3h11v14H9z", <>{ln("M8 10h12")}{dot(8, 10)}</>),
          g("M20 3H10c-8 0-8 14 0 14h10z", <>{ln("M9 10h11")}{dot(9, 10)}</>),
          g("M2 3h18v14H2z", <>{ln("M9 10h11")}{dot(10, 10)}</>)]} />
      </div>
      <div className={`${row} mt-[12px] h-[28px]`}>
        <Label w={51}>Vértice:</Label>
        <Btns w={108} className="ml-[7px]" items={[
          g("M2 2h18v11h-5v6H2z", <>{ln("M9 19V9h11")}{dot(9, 9)}</>),
          g("M20 2v11h-5v6H2v-9c0-5 4-8 9-8z", <>{ln("M9 19V9h11")}{dot(9, 9)}</>),
          g("M20 2v11h-5v6H2v-9l8-8z", <>{ln("M9 19V9h11")}{dot(9, 9)}</>)]} />
        <T w={43} className="ml-[12px] text-[#929292]">Límite:</T>
        <div className={`ml-[8px] h-full w-[56px] ${fe} ${dim}`} />
        <T w={8} className="ml-[6px] text-[#929292]">x</T>
      </div>
      <div className={`${row} mt-[12px] h-[28px]`}>
        <Label w={88}>Alinear trazo:</Label>
        <Btns w={108} className="ml-[7px]" items={[
          g("M3 2h7v9h10v7H3z", <>{ln("M5 2v12h15")}{dot(5, 13)}</>),
          g("M6 2h7v9h7v7H3v-3h3z", <>{ln("M5 2v13h15")}{dot(5, 15)}</>),
          g("M2 2h10v7h8v9H2z", <>{ln("M9 2v11h11")}{dot(9, 12)}</>)]} />
      </div>
      <Hr className="mt-[9px]" />
      <div className={`${row} mt-[11px] h-[30px]`}>
        <div className={`ml-[9px] flex h-[18px] w-[19px] items-center justify-center ${edge} bg-[#5c5c5c]`}><div className="h-[3px] w-[13px] bg-[#eee]" /></div>
        <T w={118} className="ml-[6px] text-[#ececec]">Línea discontinua</T>
        <Btns w={121} className="ml-auto mr-[32px]" items={[dash("M3 14V10M3 3h10M18 3h10M33 3h11v6M3 16h6M14 16h10M29 16h10M44 12v4"), dash("M9 3H3v4M15 3h7M26 3h7M38 3h6v4M9 16H3v-4M15 16h7M26 16h7M38 16h6v-4")]} />
      </div>
      <div className="ml-[9px] mt-[11px] flex w-[334px] shrink-0 justify-between">
        {["guión", "hueco", "guión", "hueco", "guión", "hueco"].map((t, i) => (
          <div key={i} className="flex w-[53px] flex-col items-center">
            <div className={`h-[29px] w-full ${fe} ${dim}`} />
            <T w={i % 2 ? 42 : 37} className="mt-[4px] tracking-wide text-[#929292]">{t}</T>
          </div>
        ))}
      </div>
      <Hr className="mt-[11px]" />
      <div className={`${row} mt-[12px] h-[28px]`}>
        <Label w={97}>Puntas flecha:</Label>
        <div className={`ml-[7px] flex h-full w-[82px] ${fe}`}><div className={`flex-1 ${dim}`} /><Arrow className="w-[22px]" c="#858585" /></div>
        <div className={`ml-[17px] flex h-full w-[81px] ${fe}`}><div className={`flex-1 ${dim}`} /><Arrow className="w-[22px]" c="#858585" /></div>
        <svg className="ml-[33px]" width="21" height="18" viewBox="0 0 21 18"><path d="M2 5h14M5 13h14M14 1l6 4-6 4M7 9l-6 4 6 4" stroke="#808080" strokeWidth="2" fill="#808080" /></svg>
      </div>
      <div className={`${row} mt-[18px] h-[28px]`}>
        <Label w={47}>Escala:</Label>
        <div className={`ml-[7px] flex h-full w-[82px] ${fe}`}><Stepper c="#8c8c8c" /><div className={`flex flex-1 items-center pl-[6px] text-black ${dim}`}><T w={38}>100%</T></div></div>
        <div className={`ml-[17px] flex h-full w-[81px] ${fe}`}><Stepper c="#8c8c8c" /><div className={`flex flex-1 items-center pl-[6px] text-black ${dim}`}><T w={38}>100%</T></div></div>
        <svg className="ml-[30px]" width="24" height="22" viewBox="0 0 24 22"><path d="M8 8V5q0-3 4-3t4 3v3M8 14v3q0 3 4 3t4-3v-3" stroke="#808080" strokeWidth="3" fill="none" /><path d="M1 11h5M18 11h5M2 4l4 3M22 4l-4 3M2 18l4-3M22 18l-4-3" stroke="#808080" strokeWidth="1.300" /></svg>
      </div>
      <div className={`${row} mt-[16px] h-[30px]`}>
        <Label w={51}>Alinear:</Label>
        <Btns w={73} className="ml-[7px]" items={[
          <svg width="20" height="16" viewBox="0 0 20 16"><path d="M1 3h11M1 11h12M12 3v4" stroke="#858585" strokeWidth="2" /><path d="M11 6l8 5-8 5z" fill="#858585" /></svg>,
          <svg width="20" height="16" viewBox="0 0 20 16"><path d="M1 3h18M1 11h12M19 3v4" stroke="#858585" strokeWidth="2" /><path d="M9 6l8 5-8 5z" fill="#858585" /></svg>]} />
      </div>
      <Hr className="mt-[10px]" />
      <div className={`${row} mt-[12px] h-[29px]`}>
        <Label w={38}>Perfil:</Label>
        <div className={`ml-[7px] flex h-full w-[159px] ${fe}`}><div className={`flex-1 ${dim}`} /><Arrow className="w-[23px]" c="#858585" /></div>
        <svg className="ml-[17px]" width="20" height="16" viewBox="0 0 20 16"><path d="M1 2v12l6-6z" fill="none" stroke="#858585" strokeWidth="1.300" /><path d="M10 0v16" stroke="#858585" strokeDasharray="2 2" /><path d="M20 1v14l-7-7z" fill="#858585" /></svg>
        <svg className="ml-[19px]" width="16" height="22" viewBox="0 0 16 22"><path d="M2 1h12l-6 7z" fill="#858585" /><path d="M0 11h16" stroke="#858585" strokeDasharray="2 2" /><path d="M2 20h12l-6-6z" fill="none" stroke="#858585" strokeWidth="1.300" /></svg>
      </div>
    </div>
  );
}

function Thumb({ kind }) {
  return (
    <svg width="28" height="27" viewBox="0 0 28 27" className="ml-[14px] shrink-0 bg-black">
      <rect x="2" y="2" width="25" height="23" fill="#fff" />
      {kind === "auxiliar" && <g fill="#ff9cf5"><rect x="2" y="9" width="5" height="9" /><rect x="15" y="9" width="5" height="9" /><rect x="20" y="10" width="7" height="7" fill="#ffc4fa" /></g>}
      {kind === "texto" && <g fill="#999"><rect x="3" y="9" width="2" height="3" /><rect x="20" y="9" width="2" height="3" /></g>}
      {kind === "texto_rectángulo" && <g fill="#6ff"><rect x="2" y="8" width="5" height="9" /><rect x="22" y="8" width="5" height="8" /></g>}
      {kind === "mapa/gráfico" && <g fill="#bbb"><rect x="13" y="14" width="2" height="2" /><rect x="17" y="15" width="2" height="2" /><rect x="24" y="13" width="1" height="3" /></g>}
      {kind === "borde exterior" && <g fill="none" stroke="#bbc"><path d="M2 9.500h25M2 17.500h25M14.500 9v8" /></g>}
    </svg>
  );
}

function LayersPanel() {
  const rows = [
    ["auxiliar", 48, "bg-[#ff4f4f]", 0], ["texto", 32, "bg-[#ff4f4f]", 0], ["texto_rectángulo", 113, "bg-[#ff4fff]", 1],
    ["mapa/gráfico", 90, "bg-[#4f80ff]", 0], ["borde exterior", 95, "bg-[#4f80ff]", 1],
  ];
  return (
    <div className="flex h-[610px] shrink-0 flex-col text-[14.500px] leading-none text-[#e0e0e0]">
      <div className="ml-[8px] mt-[10px] h-[570px] w-[366px] shrink-0 border border-[#2f2f2f]">
        {rows.map(([t, w, c, lock], i) => (
          <div key={t} className={`relative flex h-[32.400px] items-center border-b-2 border-[#333] ${i === 3 ? "bg-[#5a6478]" : ""}`}>
            <div className="flex h-full w-[32px] items-center justify-center border-r-2 border-[#333] pr-[4px]">
              <svg width="19" height="13" viewBox="0 0 19 13"><path d="M1 7C5 1 14 1 18 7c-4 6-13 6-17 0z" fill="none" stroke="#a9a9a9" strokeWidth="1.800" /><circle cx="9.500" cy="6.500" r="3.200" fill="#a9a9a9" /></svg>
            </div>
            <div className="flex h-full w-[32px] items-center justify-center border-r-2 border-[#333]">
              {lock ? <svg width="12" height="16" viewBox="0 0 12 16"><path d="M3 8V4q0-3 3-3t3 3v4" fill="none" stroke="#b0b0b0" strokeWidth="2" /><path d="M0 7h12v9H0z" fill="#b0b0b0" /><path d="M3 10.500h6" stroke="#444" /></svg> : null}
            </div>
            <div className={`ml-[2px] h-[28px] w-[5px] ${c}`} />
            <div className="ml-[2px] h-full w-[2px] bg-[#333]" />
            <span className="ml-[7px]"><Tri d="right" s={11} /></span>
            <Thumb kind={t} />
            <T w={w} className="ml-[8px]">{t}</T>
            <div className="ml-auto flex h-full w-[53px] items-center border-l-2 border-[#333] pl-[7px]"><div className="h-[13px] w-[14px] rounded-full border-2 border-[#a9a9a9]" /></div>
            {i === 3 && <svg className="absolute right-0 top-0" width="8" height="8" viewBox="0 0 8 8"><path d="M0 0h8v8z" fill="#ddd" /></svg>}
          </div>
        ))}
      </div>
      <div className="flex flex-1 items-center pl-[8px]">
        <T w={51}>5 capas</T>
        <svg className="ml-[104px]" width="19" height="18" viewBox="0 0 19 18"><circle cx="12" cy="7" r="6" fill="none" stroke="#6c6c6c" strokeWidth="2" /><path d="M8 11l-7 6" stroke="#6c6c6c" strokeWidth="2" /></svg>
        <svg className="ml-[21px]" width="17" height="17" viewBox="0 0 17 17"><rect x="1" y="1" width="11" height="11" fill="none" stroke="#6c6c6c" strokeWidth="2" /><rect x="6" y="6" width="10" height="10" fill="#6c6c6c" /></svg>
        <svg className="ml-[22px]" width="21" height="17" viewBox="0 0 21 17"><path d="M9 2h12v14h-7v-5H9z" fill="#c4c4c4" /><path d="M1 0v6h8M5 3v7" stroke="#c4c4c4" strokeWidth="2" fill="none" /></svg>
        <svg className="ml-[22px]" width="16" height="17" viewBox="0 0 16 17"><path d="M1 2h15v14H9v-5H1z" fill="#c4c4c4" /><path d="M1 12l6 4v-4z" fill="#999" /></svg>
        <svg className="ml-[22px]" width="17" height="18" viewBox="0 0 17 18"><path d="M0 5h17M5 3q3-3 7 0M3 7v9h11V7M6 7v8M8.500 7v8M11 7v8" stroke="#c4c4c4" strokeWidth="1.600" fill="none" /></svg>
        <svg className="ml-auto mr-[3px] self-end" width="15" height="17" viewBox="0 0 15 17"><path d="M14 2v14M11 6v10M8 9v7M5 12v4M2 14v2" stroke="#777" strokeWidth="1.800" strokeDasharray="1.800 1.500" /></svg>
      </div>
    </div>
  );
}

function ColorPanel() {
  return (
    <div className="flex flex-1 flex-col">
      <div className="mt-[11px] flex h-[28px] items-center pl-[8px] text-[14.500px] leading-none text-[#ddd]">
        <div className={`flex h-[22px] w-[62px] ${edge}`}>
          <div className="w-[18px]"><NoneSwatch /></div><div className="w-[21px] bg-black" /><div className="flex-1 bg-white" />
        </div>
        <T w={10} className="ml-[188px]">#</T>
        <div className={`ml-[7px] flex h-full w-[82px] items-center ${edge} bg-[#a2a2a2] pl-[6px] text-black`}><T w={45}>2d3f56</T></div>
      </div>
      <div className="ml-[9px] mt-[12px] h-[213px] w-[348px] border-2 border-[#2b2b2b] bg-[linear-gradient(to_bottom,#fff_0%,rgba(255,255,255,0)_50%,rgba(0,0,0,0)_50%,#000_100%),linear-gradient(to_right,#f00,#ff0_17%,#0f2_34%,#0ff_51%,#00f_67%,#f0f_84%,#f00)]" />
    </div>
  );
}

function RightDock() {
  return (
    <div className="flex w-[386px] shrink-0 flex-col border-l-2 border-[#222]">
      <div className="flex h-[19px] shrink-0 items-center justify-end bg-gradient-to-b from-[#3a3a3a] to-[#2c2c2c] pr-[6px]">
        <svg width="11" height="8" viewBox="0 0 11 8"><path d="M0 0v8l5-4zM6 0v8l5-4z" fill="#ccc" /></svg>
      </div>
      <Tabs h="h-[26px]" active={0} tabs={[["Trazo", 71, 8, 40], ["Degrad", 62, 11, 49], ["Transpa", 62, 10, 50], ["Alinear", 61, 10, 49], ["Buscatra", 66, 11, 53]]} />
      <StrokePanel />
      <div className="h-[3px] shrink-0 bg-[#262626]" />
      <Tabs h="h-[27px]" active={1} tabs={[["Mesas d", 66, 12, 52], ["Capas", 62, 11, 39], ["Enlaces", 64, 11, 50], ["Muestra", 64, 10, 52], ["Estilos g", 66, 11, 53]]} />
      <LayersPanel />
      <div className="h-[4px] shrink-0 bg-[#262626]" />
      <Tabs h="h-[26px]" active={0} tabs={[["Color", 71, 8, 39], ["Párrafo", 73, 11, 52], ["OpenType", 94, 10, 73], ["Carácter", 81, 10, 58]]} />
      <ColorPanel />
    </div>
  );
}

/* ---------- taskbar ---------- */

const Adobe = ({ t, c, bg }) => (
  <div className={`flex h-[42px] w-[43px] items-center justify-center border-[3px] text-[23px] font-bold leading-none ${c} ${bg}`}><T w={24}>{t}</T></div>
);

const Q = () => (
  <svg width="34" height="44" viewBox="0 0 34 44">
    <ellipse cx="14" cy="22" rx="9" ry="14" fill="none" stroke="#e8ee5c" strokeWidth="6" />
    <path d="M11 33c8-1 9 7 19 5l1 3c-10 5-15-1-20-4z" fill="#e8ee5c" />
    <path d="M1 37l5-4L21 14l-4-2L33 1l-2 19-4-3L12 33z" fill="#178a17" />
    <path d="M9 30L27 9" stroke="#0c5c0c" strokeWidth="1.500" />
  </svg>
);

const icons = [
  <svg width="33" height="31" viewBox="0 0 33 31"><path d="M0 4l13-2v13H0zM15 2l18-2v15H15zM0 16h13v13L0 27zM15 16h18v15l-18-2z" fill="#fff" /></svg>,
  <svg className="-ml-[8px]" width="32" height="31" viewBox="0 0 32 31" fill="none" stroke="#fff" strokeWidth="2"><rect x="1" y="9" width="19" height="13" /><path d="M1 0v5h19V0M1 31v-5h19v5M28 0v31" /><rect x="26" y="9" width="4" height="4" fill="#fff" /></svg>,
  <svg width="46" height="47" viewBox="0 0 46 47"><rect width="46" height="47" rx="2" fill="#0d78d8" /><circle cx="23" cy="23.500" r="20" fill="#fff" /><path d="M5 23.500l10-8v5h16v-5l10 8-10 8v-5H15v5z" fill="#0d78d8" /></svg>,
  <svg width="42" height="42" viewBox="0 0 42 42"><path d="M1 41l3-11C-2 14 8 1 22 1c12 0 19 9 19 19 0 13-13 23-29 18z" fill="#fff" /><path d="M5 37l2-8C3 16 11 5 22 5c9 0 15 7 15 15 0 11-12 19-25 14z" fill="#25c04c" /><path d="M14 11l3 0 2 5-2 3c2 4 4 5 7 7l3-3 5 3c0 5-5 6-9 5-7-2-14-9-13-15 0-3 2-5 4-5z" fill="#fff" /></svg>,
  <svg width="43" height="36" viewBox="0 0 43 36"><path d="M1 0h17l3 4h22v31H1z" fill="#ffe08a" /><path d="M1 0h17l3 5H1z" fill="#fbc02d" /><rect x="4" y="2" width="9" height="4" fill="#fff" /><path d="M8 17h26v18h-7V25H15v10H8z" fill="#35b0e8" /></svg>,
  <svg width="43" height="34" viewBox="0 0 43 34"><rect width="43" height="34" fill="#9a9a9a" /><rect x="2" y="4" width="39" height="25" fill="#2a2a2a" /><path d="M10 9q-4 0-4 3t4 3M13 9v1M13 14v1M17 9l4 6M23 15h6" stroke="#ccc" strokeWidth="1.500" fill="none" /></svg>,
  <svg width="46" height="47" viewBox="0 0 46 47"><rect width="46" height="47" fill="#1c1c1c" /><path d="M4 0h16l6 12 10 8 6 8-2 14-10-8-14-6-6-12z" fill="#b4b4b4" /><path d="M8 0l10 16 16 10-12 2-8-8zM26 28l12-2-2 18-8-6z" fill="#f2f2f2" /><path d="M2 20l10 12 4 15H2z" fill="#555" /><path d="M14 8l4 14 10 8" stroke="#222" strokeWidth="2.500" fill="none" /><path d="M21 0c3 8 12 14 24 20V0z" fill="#d5d5d5" opacity=".35" /><circle cx="22" cy="25" r="2" fill="#e33" /></svg>,
  <svg width="46" height="47" viewBox="0 0 46 47"><rect width="46" height="47" fill="#8b8d92" /><path d="M0 0h20v8h-6v7H2v-4H0z" fill="#4a2a24" /><circle cx="15" cy="5" r="5" fill="#2b1814" /><path d="M5 44c0-20 36-20 36 0v3H5z" fill="#96b93c" /><path d="M12 23l4 7M34 23l-4 7" stroke="#b5d45a" strokeWidth="2.500" /><circle cx="16" cy="38" r="2" fill="#fff" /><circle cx="30" cy="38" r="2" fill="#fff" /></svg>,
  <Q />,
  <Adobe t="Id" c="border-[#e8308f] text-[#f03a98]" bg="bg-[#36061f]" />,
  <Adobe t="Ps" c="border-[#6cb4f0] text-[#8cc6fa]" bg="bg-[#0a0a50]" />,
  <Adobe t="Ai" c="border-[#f59a1d] text-[#f8a637]" bg="bg-[#2e1a05]" />,
  <svg width="42" height="42" viewBox="0 0 42 42"><path d="M12 0h18l2 9H10zM12 42h18l2-9H10z" fill="#d8202c" stroke="#ddd" /><path d="M9 6l6 3h14l7 5 4 6v14l-6 3-6-6V20l-6-4-10 4-4-4H2l2-6z" fill="#3a3a3a" stroke="#c4c4c4" strokeWidth="1.500" /><path d="M33 36l-6-3H13l-7-4-4-7V12l8-2 4 6v8l8 4 8-4 6 4h2l-2 6z" fill="#2c2c2c" stroke="#c4c4c4" strokeWidth="1.500" /></svg>,
  <svg width="46" height="38" viewBox="0 0 46 38"><path d="M1 28L23 12H6V8h20l-6-6 4-2 18 14c8 14-4 24-14 23-9 0-14-7-13-14L5 32z" fill="#f58220" /><circle cx="29" cy="22" r="10" fill="#fff" /><circle cx="29" cy="22" r="6" fill="#16559f" /></svg>,
  <svg width="46" height="46" viewBox="0 0 46 46"><defs><linearGradient id="at" x1="0" y1="0" x2="0" y2="1"><stop offset="0" stopColor="#9fd88a" /><stop offset="1" stopColor="#0f9f78" /></linearGradient></defs><circle cx="23" cy="23" r="23" fill="url(#at)" /><g fill="none" stroke="#fff" strokeWidth="1.600"><ellipse cx="23" cy="23" rx="5.500" ry="14" /><ellipse cx="23" cy="23" rx="5.500" ry="14" transform="rotate(60 23 23)" /><ellipse cx="23" cy="23" rx="5.500" ry="14" transform="rotate(120 23 23)" /></g><circle cx="23" cy="23" r="2" fill="#fff" /></svg>,
  <svg width="46" height="46" viewBox="0 0 46 46"><path d="M44 0c-5 3-12 12-13 22l10 2c3-8 5-16 3-24z" fill="#c4c4c4" /><ellipse cx="26" cy="30" rx="17" ry="9" fill="none" stroke="#56822b" strokeWidth="3" /><path d="M16 30c0-10 10-18 18-15 6 6 4 18-1 24-9 6-17 0-17-9z" fill="#b3605a" /><path d="M0 45l9-2 10-6-2 8-8-1z" fill="#aaa" /></svg>,
  <svg width="43" height="43" viewBox="0 0 42 42"><circle cx="21" cy="21" r="21" fill="#ffcd41" /><path d="M21 21L2.800 10.500A21 21 0 0 1 39.200 10.500L21 11z" fill="#db4a3f" /><path d="M2.800 10.500A21 21 0 0 0 20 42l9.500-17L12 26z" fill="#1fa463" /><circle cx="21" cy="21" r="10" fill="#fff" /><circle cx="21" cy="21" r="8" fill="#4c8bf5" /></svg>,
  <div className="rounded-full bg-[#111]"><FaSpotify size={43} color="#1ed760" /></div>,
  <svg width="36" height="35" viewBox="0 0 36 35"><path d="M0 0h36v18H18v17H0zM34 20v15H20z" fill="#fff" /></svg>,
  <Q />,
];
const running = [4, 11, 16, 17, 18, 19];

function Taskbar() {
  return (
    <div className="flex h-[78px] shrink-0 bg-[#1f1711] text-white">
      {icons.map((ic, i) => (
        <div key={i} className={`relative flex shrink-0 items-center justify-center ${i === 0 ? "w-[93.900px]" : "w-[95.300px]"} ${i === 11 ? "bg-[#4d4440]" : ""}`}>
          {ic}
          {running.includes(i) && <div className={`absolute bottom-0 h-[5px] bg-[#74b6ec] ${i === 11 ? "inset-x-0" : "inset-x-[8px]"}`} />}
        </div>
      ))}
      <div className="ml-auto flex items-center font-['Open_Sans',sans-serif] text-[23px] leading-none">
        <svg width="28" height="31" viewBox="0 0 28 31" fill="none" stroke="#fff" strokeWidth="2.200"><circle cx="19" cy="6" r="5" /><circle cx="8" cy="16" r="4.500" /><path d="M1 30c0-12 14-12 14 0M13 14c6-6 14-1 14 4" /></svg>
        <svg className="ml-[42px]" width="25" height="14" viewBox="0 0 25 14"><path d="M1 13L12.500 2 24 13" fill="none" stroke="#fff" strokeWidth="2.200" /></svg>
        <svg className="ml-[17px]" width="31" height="22" viewBox="0 0 31 22"><path d="M8 5h20v15H8z" fill="none" stroke="#fff" strokeWidth="2" /><path d="M11 8h14v9H11zM28 9h3v7h-3zM1 4h8v5H6v8H4V9H1z" fill="#fff" /><path d="M3 0v5M7 0v5" stroke="#fff" strokeWidth="1.500" /></svg>
        <svg className="ml-[16px]" width="32" height="27" viewBox="0 0 32 27"><path d="M6 20C-2 19 0 9 6 9 8 0 20-1 22 7c5 0 6 4 6 7z" fill="#fff" /><circle cx="21" cy="17" r="9.500" fill="#fff" /><path d="M15 16a6 6 0 0 1 11-2M27 18a6 6 0 0 1-11 2M26 9v5h-5M16 25v-5h5" fill="none" stroke="#1d5fc4" strokeWidth="2.400" /></svg>
        <svg className="ml-[19px]" width="24" height="24" viewBox="0 0 24 24" fill="none" stroke="#fff" strokeWidth="2"><path d="M1 23C1 11 11 1 23 1" opacity=".7" /><path d="M7 23C7 14 14 7 23 7" /><path d="M13 23c0-6 4-10 10-10" /><circle cx="21" cy="21" r="2" fill="#fff" /></svg>
        <svg className="ml-[18px]" width="31" height="24" viewBox="0 0 31 24" fill="none" stroke="#fff" strokeWidth="2"><path d="M1 8h4l6-6v20l-6-6H1z" /><path d="M15 8q3 4 0 8M19 5q6 7 0 14" /><path d="M24 1q9 11 0 22" opacity=".5" /></svg>
        <T w={40} className="ml-[21px]">CAT</T>
        <div className="ml-[27px] flex h-full w-[118px] flex-col items-center justify-between pb-[8px] pt-[11px]">
          <T w={51}>12:41</T>
          <T w={118}>05/07/2018</T>
        </div>
        <div className="relative ml-[34px] h-[47px] w-[46px]">
          <svg width="32" height="32" viewBox="0 0 32 32"><path d="M0 0h32v26H15l-6 6v-6H0z" fill="#fff" /><path d="M6 7h20M6 13h20M6 19h14" stroke="#1f1711" strokeWidth="2" /></svg>
          <div className="absolute bottom-0 right-0 flex h-[31px] w-[31px] items-center justify-center rounded-full border-2 border-[#8a8580] bg-[#322e2b] text-[21px] font-bold">3</div>
        </div>
        <div className="ml-[25px] mr-[7px] h-full w-[1px] bg-[#8a8580]" />
      </div>
    </div>
  );
}

/* ---------- page ---------- */

export default function App() {
  return (
    <div className="flex h-[2480px] w-[3508px] flex-col items-start overflow-hidden border-2 border-[#2d3f56] bg-white font-['Noto_Sans',sans-serif]">
      <div className="ml-[276px] mt-[102px] h-[138px] w-[1124px] shrink-0 bg-[#0ff] pl-[41px] pt-[15px] text-[101px] font-bold italic leading-none text-[#2d3f56]">
        <T w={984}>posicionar elementos</T>
      </div>
      <div className="ml-[276px] mt-[168px] flex h-[1661px] w-[2953px] shrink-0 flex-col">
        <div className="flex h-[1583px] shrink-0 flex-col border-x-[3px] border-b-2 border-t-2 border-black bg-[#494949]">
          <MenuBar />
          <div className="mx-[4px] mb-[4px] flex min-h-0 flex-1 flex-col border-x border-b border-[#222]">
            <ControlBar />
            <div className="flex min-h-0 flex-1">
              <div className="flex min-w-0 flex-1 flex-col">
                <div className="flex h-[31px] shrink-0 items-stretch bg-[#333] text-[15.500px] leading-none">
                  <div className="flex w-[509px] items-center border-r-2 border-[#222] bg-[#494949] pl-[14px] pt-[1px] font-semibold text-[#e0e0e0]">
                    <T w={456}>plantilla_mapas y gráficos.ai* al 100% (RGB/Previsualizar)</T>
                    <svg className="ml-[19px]" width="9" height="9" viewBox="0 0 9 9"><path d="M1 1l7 7M8 1L1 8" stroke="#ccc" strokeWidth="2" /></svg>
                  </div>
                  <div className="flex w-[485px] items-center border-r-2 border-[#222] pl-[15px] pt-[1px] font-semibold text-[#999]">
                    <T w={430}>illustrator_snapshots.ai* al 66.67% (RGB/Previsualizar)</T>
                    <svg className="ml-[19px]" width="9" height="9" viewBox="0 0 9 9"><path d="M1 1l7 7M8 1L1 8" stroke="#ccc" strokeWidth="2" /></svg>
                  </div>
                </div>
                <div className="flex min-h-0 flex-1">
                  <Canvas />
                  <div className="flex w-[26px] shrink-0 flex-col items-center border-x-2 border-[#262626] bg-[#353535] py-[8px]">
                    <Tri d="up" s={13} />
                    <div className="mt-[683px] h-[24px] w-full bg-[#8f8f8f]" />
                    <span className="mt-auto"><Tri s={13} /></span>
                  </div>
                </div>
                <StatusBar />
              </div>
              <RightDock />
            </div>
          </div>
        </div>
        <Taskbar />
      </div>
    </div>
  );
}
